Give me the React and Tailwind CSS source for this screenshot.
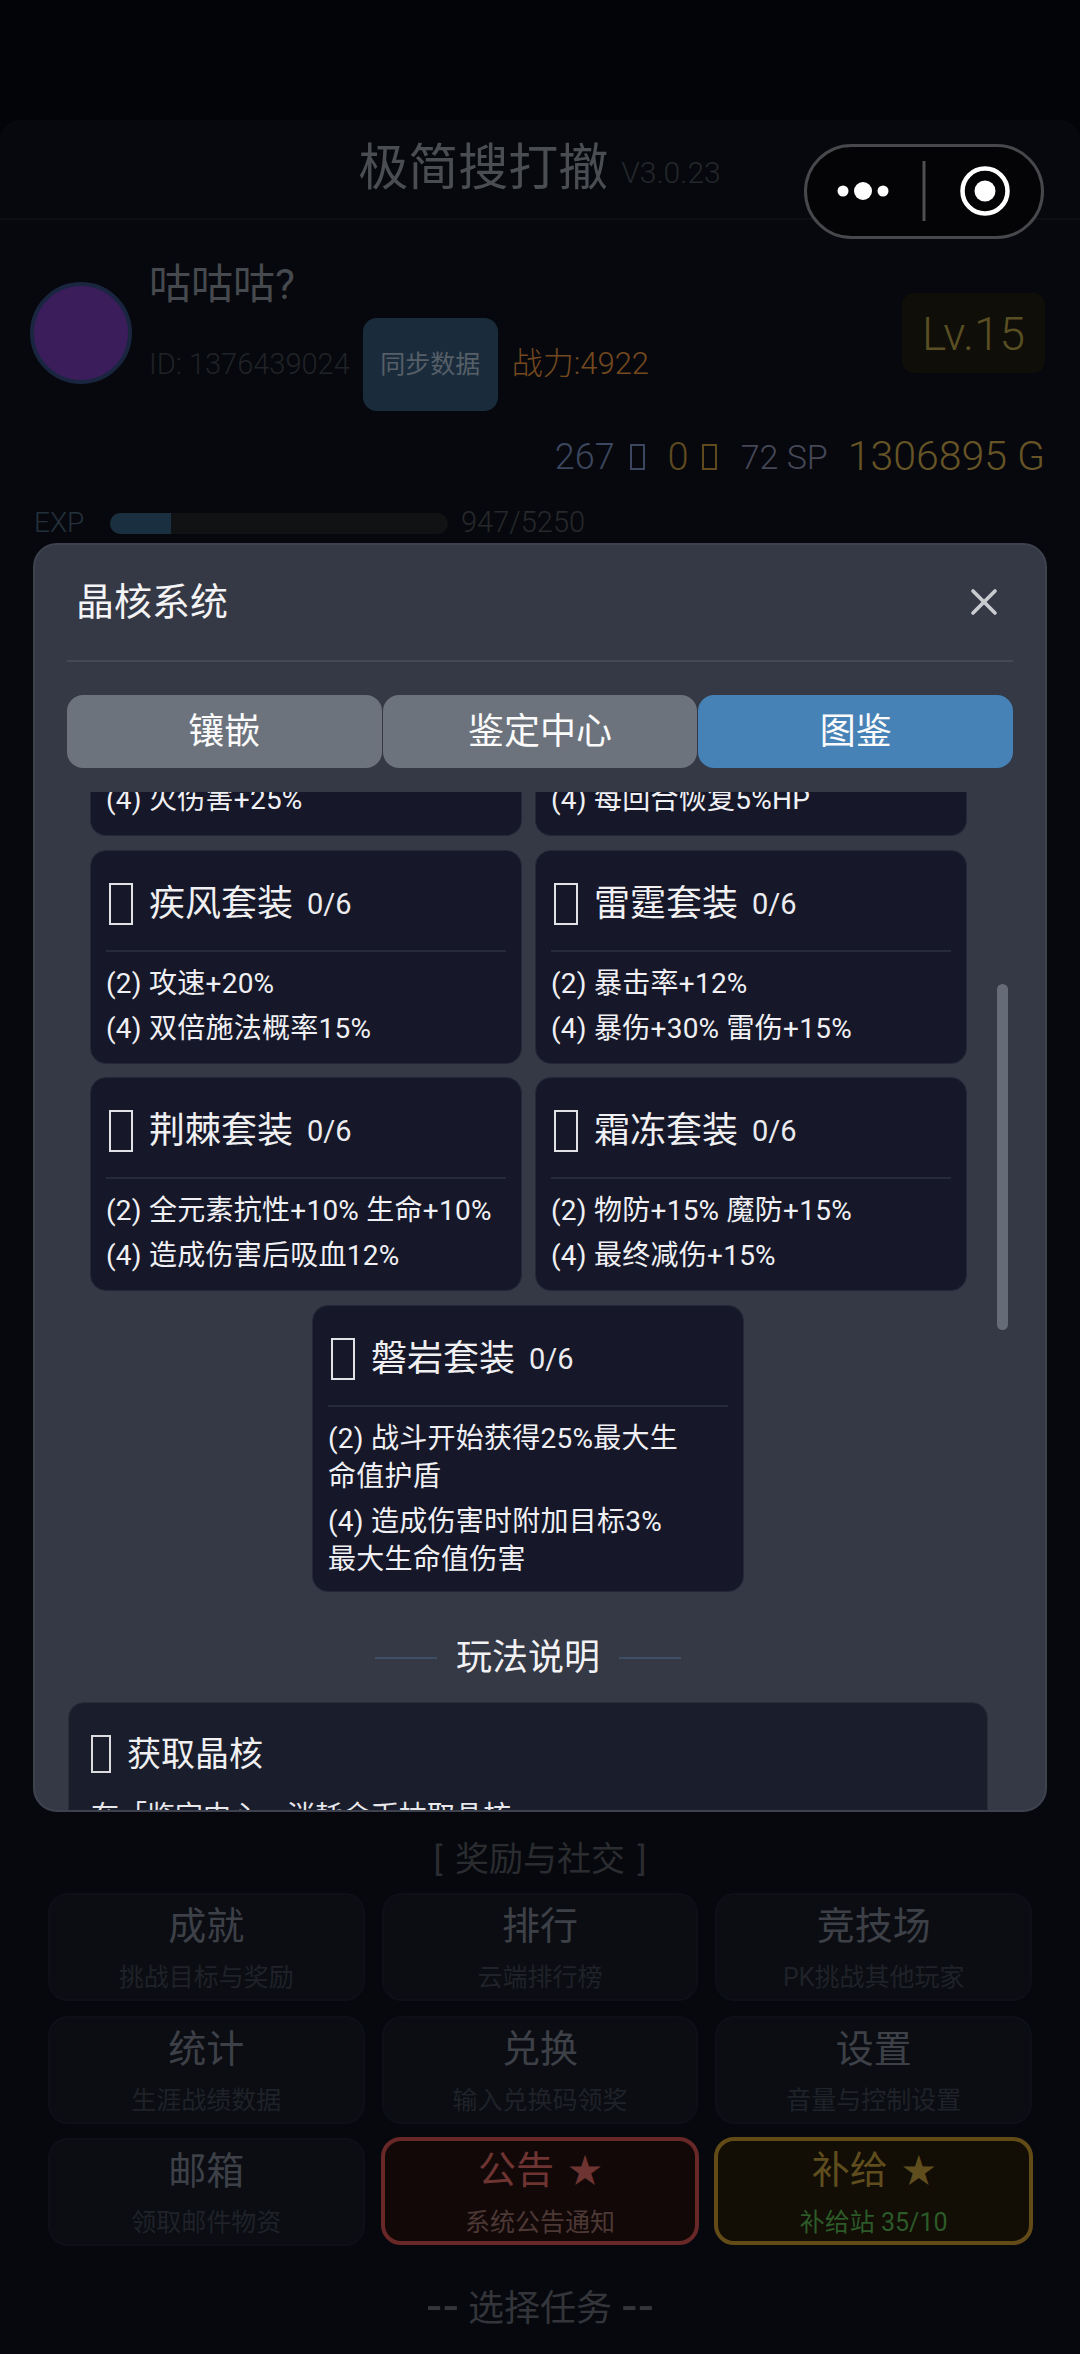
import React from "react";
import { X } from "lucide-react";

const font = { fontFamily: 'Roboto,"Noto Sans CJK SC",sans-serif' };

function Tofu({ className }) {
  return <span aria-hidden="true" className={className} />;
}

function SetCard({ name, lines, lineClass = "", padClass = "pb-[15px]" }) {
  return (
    <div className={`w-[432px] rounded-[16px] bg-[#161829] border border-[#252838] px-[15px] pt-[14px] ${padClass}`}>
      <div className="flex items-center h-[78px] pb-[1px]">
        <Tofu className="w-[24px] h-[42px] border-2 border-[#e2e2e6] shrink-0 ml-[3px]" />
        <span className="ml-[16px] text-[36px] leading-[50px] text-[#f0f0f2]">{name}</span>
        <span className="ml-[14px] text-[29px] leading-[40px] text-[#ececf0]">0/6</span>
      </div>
      <div className="h-[2px] bg-[#272a3a] mt-[7px] mb-[13px]" />
      <div className="flex flex-col gap-[7px]">
        {lines.map((l) => (
          <div key={l} className={`text-[28px] leading-[38px] tracking-[0.25px] text-[#f0f0f4] ${lineClass}`}>{l}</div>
        ))}
      </div>
    </div>
  );
}

function Cut({ text }) {
  return (
    <div className="w-[432px] h-[44px] rounded-b-[16px] bg-[#161829] border-b border-x border-[#252838] px-[15px] overflow-hidden">
      <div className="-mt-[11px] text-[28px] leading-[38px] tracking-[0.25px] text-[#f0f0f4]">{text}</div>
    </div>
  );
}

function Tile({ title, sub, star, variant }) {
  const box =
    variant === "red"
      ? "-m-[1px] bg-[#120808] border-[4px] border-[#692828]"
      : variant === "gold"
      ? "-m-[1px] bg-[#120d05] border-[4px] border-[#634b18]"
      : "bg-[#0b0d13] border-2 border-[#0e1017]";
  const t = variant === "red" ? "text-[#6e3431]" : variant === "gold" ? "text-[#5f4d1e]" : "text-[#3d4047]";
  const s = variant === "red" ? "text-[#4d3835]" : variant === "gold" ? "text-[#2c5a28]" : "text-[#1f2228]";
  return (
    <div className={`h-[108px] rounded-[20px] flex flex-col items-center justify-center ${box}`}>
      <div className={`text-[38px] leading-[50px] mt-[2px] ${t}`}>
        {title}
        {star && <span className="ml-[14px] text-[34px]">★</span>}
      </div>
      <div className={`text-[25px] leading-[34px] mt-[10px] ${s}`}>{sub}</div>
    </div>
  );
}

function Dash() {
  return <span className="text-[50px] leading-[50px] font-['Liberation_Sans']">--</span>;
}

export default function App() {
  return (
    <div className="relative h-[2354px] w-[1080px] overflow-hidden bg-[#030408]" style={font}>
      {/* page behind the overlay */}
      <div className="mt-[120px] pt-0 rounded-t-[20px] bg-[#06080d]">
        <div className="h-[100px] border-b-2 border-[#0c0e13] flex items-center justify-center pb-[2px] pr-[1px]">
          <span className="text-[50px] leading-[60px] text-[#4a4d52]">极简搜打撤</span>
          <span className="ml-[13px] mt-[8px] text-[30px] font-light text-[#24272b]">V3.0.23</span>
        </div>

        <div className="flex pl-[30px] pr-[35px] pt-[40px]">
          <div className="w-[102px] h-[102px] mt-[22px] rounded-full bg-[#3a1d5a] border-[4px] border-[#1a2540]" />
          <div className="ml-[17px] flex-1">
            <div className="text-[42px] leading-[50px] text-[#46494d]">咕咕咕?</div>
            <div className="mt-[8px] flex items-center h-[93px]">
              <span className="text-[29px] font-light text-[#202327]">ID: 1376439024</span>
              <div className="ml-[13px] w-[135px] h-[93px] rounded-[14px] bg-[#1a2c3c] flex items-center justify-center text-[25px] text-[#565f67]">同步数据</div>
              <span className="ml-[14px] text-[31px] font-light text-[#74491f]">战力:4922</span>
            </div>
          </div>
          <div className="w-[143px] h-[80px] mt-[33px] rounded-[12px] bg-[#0f0e09] flex items-center justify-center text-[46px] font-light text-[#5a4f22] pt-[2px]">Lv.15</div>
        </div>

        <div className="flex items-center justify-end pr-[35px] mt-[22px] h-[48px]">
          <span className="text-[36px] font-light text-[#3c465e]">267</span>
          <Tofu className="ml-[15px] w-[15px] h-[26px] border-2 border-[#3c465e]" />
          <span className="ml-[23px] text-[38px] font-light text-[#5f4a20]">0</span>
          <Tofu className="ml-[13px] w-[15px] h-[26px] border-2 border-[#5f4a20]" />
          <span className="ml-[24px] text-[34px] font-light text-[#454757]">72 SP</span>
          <span className="ml-[20px] text-[41px] font-light text-[#665426]">1306895 G</span>
        </div>

        <div className="flex items-center pl-[34px] mt-[22px] h-[40px]">
          <span className="w-[76px] text-[28px] font-light text-[#24303c]">EXP</span>
          <div className="w-[338px] h-[21px] rounded-full bg-[#101214] overflow-hidden">
            <div className="w-[61px] h-full bg-[#1a3040]" />
          </div>
          <span className="ml-[13px] text-[29px] font-light text-[#26282b]">947/5250</span>
        </div>

        <div className="mt-[1294px] text-center text-[34px] leading-[44px] [word-spacing:4px] text-[#2a2c30]">[ 奖励与社交 ]</div>

        <div className="mx-[48px] mt-[12px] grid grid-cols-3 gap-x-[17px] gap-y-[14.5px]">
          <Tile title="成就" sub="挑战目标与奖励" />
          <Tile title="排行" sub="云端排行榜" />
          <Tile title="竞技场" sub="PK挑战其他玩家" />
          <Tile title="统计" sub="生涯战绩数据" />
          <Tile title="兑换" sub="输入兑换码领奖" />
          <Tile title="设置" sub="音量与控制设置" />
          <Tile title="邮箱" sub="领取邮件物资" />
          <Tile title="公告" sub="系统公告通知" star variant="red" />
          <Tile title="补给" sub="补给站 35/10" star variant="gold" />
        </div>

        <div className="mt-[33px] text-center text-[36px] leading-[50px] text-[#33353a]">
          <Dash /> 选择任务 <Dash />
        </div>
        <div className="mx-[35px] mt-[22px] h-[40px] rounded-t-[16px] border-2 border-[#10141f] bg-[#080a12]" />
      </div>

      {/* WeChat capsule */}
      <div className="absolute left-[804px] top-[144px] w-[240px] h-[95px] rounded-full border-[3px] border-[#47484c] bg-[#040406] flex items-center">
        <svg width="240" height="95" viewBox="0 0 240 95" className="absolute -left-[3px] -top-[3px]">
          <circle cx="39" cy="47" r="5.5" fill="#fff" />
          <circle cx="59" cy="47" r="9" fill="#fff" />
          <circle cx="79" cy="47" r="5.5" fill="#fff" />
          <rect x="118.5" y="17" width="3" height="60" fill="#4e4f53" />
          <circle cx="181" cy="47" r="22.5" fill="none" stroke="#fff" strokeWidth="4.5" />
          <circle cx="181" cy="47" r="10.5" fill="#fff" />
        </svg>
      </div>

      {/* Modal */}
      <div className="absolute left-[33px] top-[543px] w-[1014px] h-[1269px] rounded-[24px] bg-[#343945] border-2 border-[#3d424e] flex flex-col overflow-hidden">
        <div className="mx-[32px] h-[117px] border-b-2 border-[#454954] flex items-center justify-between">
          <span className="text-[38px] leading-[50px] text-[#f4f4f6] -mt-[1px] ml-[9px]">晶核系统</span>
          <X size={44} strokeWidth={2} className="text-[#c9cbd0] mr-[7px] -mt-[1px]" />
        </div>
        <div className="mx-[32px] mt-[33px] grid grid-cols-3 gap-[1px] h-[73px]">
          <div className="rounded-[16px] bg-[#6c737d] flex items-center justify-center text-[36px] text-[#fafafa]">镶嵌</div>
          <div className="rounded-[16px] bg-[#6c737d] flex items-center justify-center text-[36px] text-[#fafafa]">鉴定中心</div>
          <div className="rounded-[16px] bg-[#4682b6] flex items-center justify-center text-[36px] text-[#fafafa]">图鉴</div>
        </div>

        <div className="relative mt-[24px] flex-1 overflow-hidden">
          <div className="ml-[55px] w-[876px] grid grid-cols-[432px_432px] gap-x-[13px] gap-y-[14px]">
            <Cut text="(4) 火伤害+25%" />
            <Cut text="(4) 每回合恢复5%HP" />
            <SetCard name="疾风套装" lines={["(2) 攻速+20%", "(4) 双倍施法概率15%"]} />
            <SetCard name="雷霆套装" lines={["(2) 暴击率+12%", "(4) 暴伤+30% 雷伤+15%"]} />
          </div>
          <div className="ml-[55px] mt-[13px] w-[876px] grid grid-cols-[432px_432px] gap-x-[13px]">
            <SetCard name="荆棘套装" lines={["(2) 全元素抗性+10% 生命+10%", "(4) 造成伤害后吸血12%"]} />
            <SetCard name="霜冻套装" lines={["(2) 物防+15% 魔防+15%", "(4) 最终减伤+15%"]} />
          </div>
          <div className="ml-[55px] w-[876px] flex justify-center mt-[14px]">
            <SetCard
              name="磐岩套装"
              lineClass="max-w-[352px]"
              padClass="pb-[12px]"
              lines={["(2) 战斗开始获得25%最大生命值护盾", "(4) 造成伤害时附加目标3%最大生命值伤害"]}
            />
          </div>

          <div className="ml-[55px] w-[876px] flex items-center justify-center mt-[41px]">
            <div className="w-[62px] h-[2px] bg-[#3e4f66]" />
            <span className="mx-[19px] text-[36px] leading-[50px] text-[#f2f2f4]">玩法说明</span>
            <div className="w-[62px] h-[2px] bg-[#3e4f66]" />
          </div>

          <div className="ml-[33px] w-[920px] mt-[19px] rounded-t-[16px] bg-[#1a1e2c] border border-[#292d3a] px-[22px] pt-[31px] h-[200px]">
            <div className="flex items-center">
              <Tofu className="w-[20px] h-[38px] border-2 border-[#dcdcdf] shrink-0" />
              <span className="ml-[16px] text-[34px] leading-[40px] text-[#f0f0f2]">获取晶核</span>
            </div>
            <div className="mt-[24px] text-[28px] leading-[38px] text-[#e8e8ec]">在「鉴定中心」消耗金币抽取晶核</div>
          </div>

          <div className="absolute right-[37px] top-[192px] w-[11px] h-[346px] rounded-full bg-[#666c77]" />
        </div>
      </div>
    </div>
  );
}
